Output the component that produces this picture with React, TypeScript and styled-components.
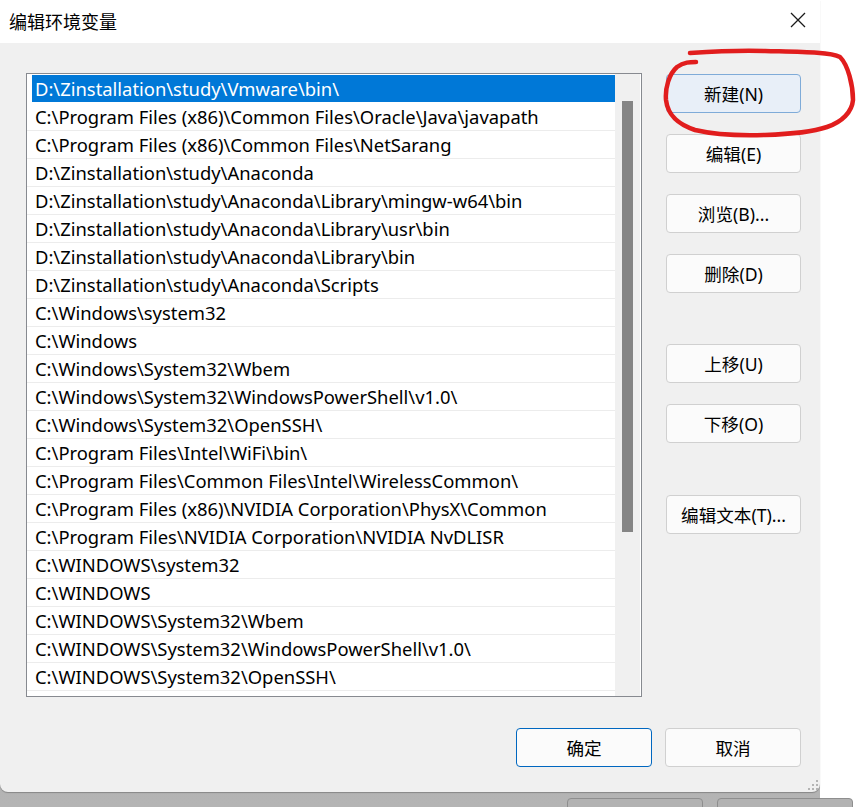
import React from "react";
import styled, { createGlobalStyle } from "styled-components";

const GlobalStyle = createGlobalStyle`
  html, body { margin: 0; padding: 0; background: #ffffff; }
  body { font-family: "Noto Sans", "Noto Sans CJK SC", sans-serif; }
  * { box-sizing: border-box; }
`;

const FONT = `"Noto Sans", "Noto Sans CJK SC", sans-serif`;

const Screen = styled.div`
  position: relative;
  width: 856px;
  height: 807px;
  overflow: hidden;
  background: #ffffff;
`;

const Stage = styled.div`
  width: 820px;
  height: 807px;
  display: flex;
  flex-direction: column;
  background: linear-gradient(#a3a3a3, #b4b4b4);
`;

const Dialog = styled.div`
  position: relative;
  width: 820px;
  height: 792px;
  flex: none;
  display: flex;
  flex-direction: column;
  background: #f0f0f0;
  border-radius: 0 0 8px 8px;
  box-shadow: 0 1px 1px rgba(0, 0, 0, 0.25);
  font-family: ${FONT};
`;

const TitleBar = styled.div`
  height: 43px;
  flex: none;
  display: flex;
  align-items: center;
  justify-content: space-between;
  padding: 0 0 2px 9px;
  background: #ffffff;
  font-size: 18px;
  color: #000;
`;

const CloseButton = styled.div`
  width: 44px;
  height: 43px;
  display: flex;
  align-items: center;
  justify-content: center;
  padding-bottom: 1px;
`;

const Content = styled.div`
  display: flex;
  flex-direction: row;
  align-items: flex-start;
  gap: 24px;
  padding: 30px 19px 0 26px;
`;

const ListBox = styled.div`
  width: 616px;
  height: 624px;
  flex: none;
  display: flex;
  border: 1px solid #878a90;
  background: #ffffff;
`;

const Rows = styled.div`
  width: 588px;
  flex: none;
  display: flex;
  flex-direction: column;
  padding-top: 1px;
  overflow: hidden;
`;

const Row = styled.div<{ $selected?: boolean }>`
  height: 28px;
  flex: none;
  display: flex;
  padding-left: 5px;
  border-bottom: 1px solid ${(p) => (p.$selected ? "transparent" : "#ececec")};
`;

const RowText = styled.div<{ $selected?: boolean }>`
  flex: 1;
  display: flex;
  align-items: center;
  padding-left: 3px;
  font-size: 18.4px;
  white-space: nowrap;
  color: ${(p) => (p.$selected ? "#ffffff" : "#000000")};
  background: ${(p) => (p.$selected ? "#0078d7" : "transparent")};
`;

const ScrollTrack = styled.div`
  flex: 1;
  background: #f0f0f0;
  padding: 27px 7px 0 7px;
  border-right: 1px solid #ffffff;
`;

const ScrollThumb = styled.div`
  width: 11px;
  height: 431px;
  background: #858585;
`;

const ButtonColumn = styled.div`
  display: flex;
  flex-direction: column;
  gap: 21px;
  padding-top: 1px;
`;

const Button = styled.div<{
  $variant?: "hover" | "default" | "normal";
  $gapBefore?: number;
  $width?: number;
}>`
  width: ${(p) => p.$width ?? 135}px;
  height: 39px;
  display: flex;
  align-items: center;
  justify-content: center;
  padding-bottom: 1px;
  border-radius: 4px;
  font-family: ${FONT};
  font-size: 17.6px;
  color: #000;
  margin-top: ${(p) => p.$gapBefore ?? 0}px;
  background: ${(p) => (p.$variant === "hover" ? "#e8eff8" : "#fbfbfb")};
  border: 1px solid
    ${(p) =>
      p.$variant === "hover" ? "#7fabd8" : p.$variant === "default" ? "#0067c0" : "#d0d0d0"};
`;

const Footer = styled.div`
  display: flex;
  justify-content: flex-end;
  gap: 13px;
  padding: 31px 19px 0 0;
`;

const Grip = styled.svg`
  position: absolute;
  right: 2px;
  bottom: 2px;
`;

const BehindStrip = styled.div`
  height: 15px;
  flex: none;
  display: flex;
  gap: 14px;
  padding: 6px 0 0 567px;
`;

const GhostButton = styled.div<{ $w: number }>`
  width: ${(p) => p.$w}px;
  height: 20px;
  flex: none;
  border: 1px solid #8e8e8e;
  border-radius: 4px;
  background: #b2b2b2;
`;

const Annotation = styled.svg`
  position: absolute;
  left: 0;
  top: 0;
  pointer-events: none;
`;

const paths = [
  "D:\\Zinstallation\\study\\Vmware\\bin\\",
  "C:\\Program Files (x86)\\Common Files\\Oracle\\Java\\javapath",
  "C:\\Program Files (x86)\\Common Files\\NetSarang",
  "D:\\Zinstallation\\study\\Anaconda",
  "D:\\Zinstallation\\study\\Anaconda\\Library\\mingw-w64\\bin",
  "D:\\Zinstallation\\study\\Anaconda\\Library\\usr\\bin",
  "D:\\Zinstallation\\study\\Anaconda\\Library\\bin",
  "D:\\Zinstallation\\study\\Anaconda\\Scripts",
  "C:\\Windows\\system32",
  "C:\\Windows",
  "C:\\Windows\\System32\\Wbem",
  "C:\\Windows\\System32\\WindowsPowerShell\\v1.0\\",
  "C:\\Windows\\System32\\OpenSSH\\",
  "C:\\Program Files\\Intel\\WiFi\\bin\\",
  "C:\\Program Files\\Common Files\\Intel\\WirelessCommon\\",
  "C:\\Program Files (x86)\\NVIDIA Corporation\\PhysX\\Common",
  "C:\\Program Files\\NVIDIA Corporation\\NVIDIA NvDLISR",
  "C:\\WINDOWS\\system32",
  "C:\\WINDOWS",
  "C:\\WINDOWS\\System32\\Wbem",
  "C:\\WINDOWS\\System32\\WindowsPowerShell\\v1.0\\",
  "C:\\WINDOWS\\System32\\OpenSSH\\",
];

const sideButtons: { label: string; gap?: number; variant?: "hover" }[] = [
  { label: "新建(N)", variant: "hover" },
  { label: "编辑(E)" },
  { label: "浏览(B)..." },
  { label: "删除(D)" },
  { label: "上移(U)", gap: 30 },
  { label: "下移(O)" },
  { label: "编辑文本(T)...", gap: 31 },
];

export default function App() {
  return (
    <Screen>
      <GlobalStyle />
      <Stage>
        <Dialog>
          <TitleBar>
            <span>编辑环境变量</span>
            <CloseButton>
              <svg width="16" height="16" viewBox="0 0 16 16">
                <path d="M1 1 L15 15 M15 1 L1 15" stroke="#1a1a1a" strokeWidth="1.3" fill="none" />
              </svg>
            </CloseButton>
          </TitleBar>
          <Content>
            <ListBox>
              <Rows>
                {paths.map((p, i) => (
                  <Row key={i} $selected={i === 0}>
                    <RowText $selected={i === 0}>{p}</RowText>
                  </Row>
                ))}
              </Rows>
              <ScrollTrack>
                <ScrollThumb />
              </ScrollTrack>
            </ListBox>
            <ButtonColumn>
              {sideButtons.map((b) => (
                <Button key={b.label} $variant={b.variant ?? "normal"} $gapBefore={b.gap}>
                  {b.label}
                </Button>
              ))}
            </ButtonColumn>
          </Content>
          <Footer>
            <Button $variant="default" $width={136}>确定</Button>
            <Button $variant="normal" $width={136}>取消</Button>
          </Footer>
          <Grip width="10" height="10" viewBox="0 0 10 10">
            <g fill="#b4b4b4">
              <rect x="8" y="0" width="2" height="2" />
              <rect x="4" y="4" width="2" height="2" />
              <rect x="8" y="4" width="2" height="2" />
              <rect x="0" y="8" width="2" height="2" />
              <rect x="4" y="8" width="2" height="2" />
              <rect x="8" y="8" width="2" height="2" />
            </g>
          </Grip>
        </Dialog>
        <BehindStrip>
          <GhostButton $w={136} />
          <GhostButton $w={136} />
        </BehindStrip>
      </Stage>
      <Annotation width="856" height="807" viewBox="0 0 856 807">
        <path
          d="M690 53 C720 51 740 50 765 51 C800 52 830 52 840 57 C848 65 853 85 853 100 C852 112 842 122 827 127 C812 132 795 134 765 135 C735 136 712 134 695 130 C680 125 668 117 666 100 C665 88 669 74 677 67 C684 62 690 62 696 62"
          stroke="#e11d1d"
          strokeWidth="4.5"
          fill="none"
          strokeLinecap="round"
          strokeLinejoin="round"
        />
      </Annotation>
    </Screen>
  );
}
